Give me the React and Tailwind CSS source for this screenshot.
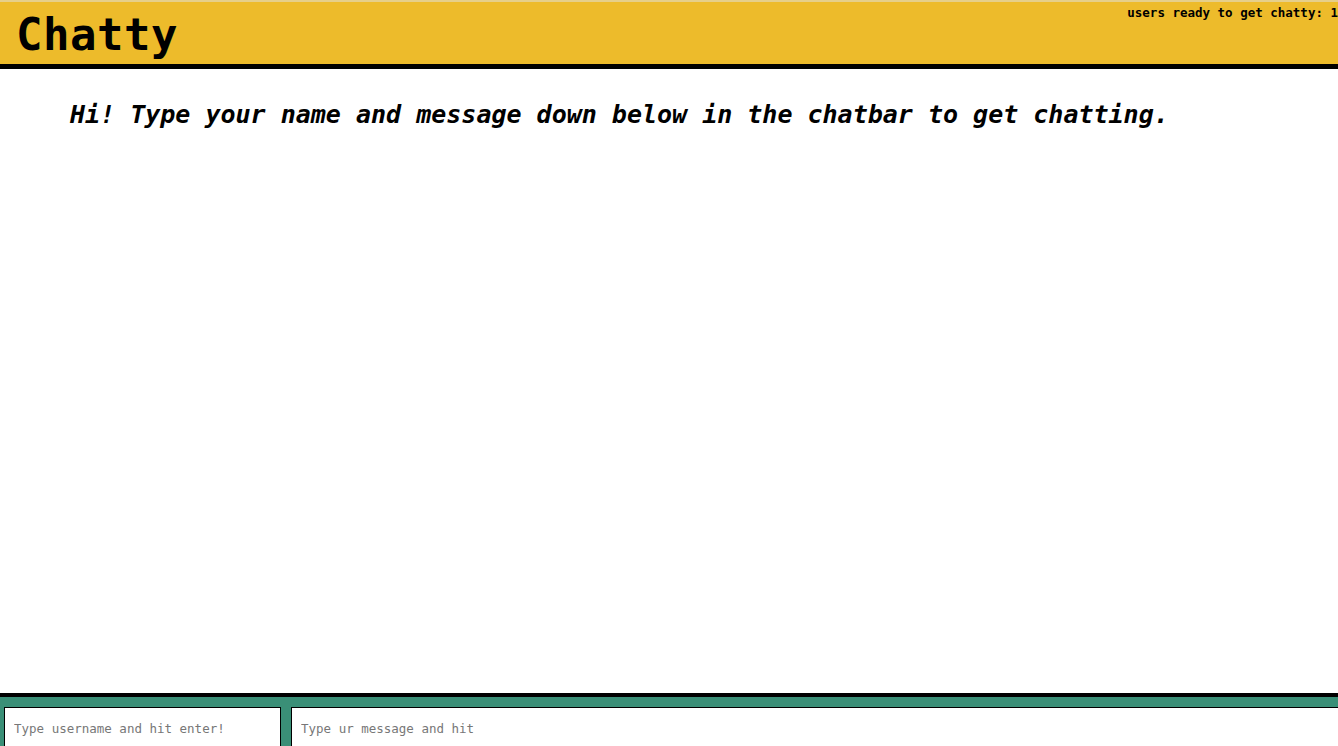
const mono = { fontFamily: '"DejaVu Sans Mono", "Liberation Mono", monospace' };

const App = () => {
  return (
    <div
      className="h-[746px] w-full overflow-hidden bg-white flex flex-col"
      style={mono}
    >
      <header className="h-[69px] shrink-0 bg-[#edbb2b] border-t-[2px] border-t-[#e6cf8a] border-b-[5px] border-b-black flex items-start justify-between">
        <h1 className="text-[44px] leading-none font-bold text-black ml-4 mt-[11px] tracking-[0.5px]">
          Chatty
        </h1>
        <span className="text-[12.5px] font-semibold text-black mt-[2px] whitespace-nowrap">
          users ready to get chatty: 1
        </span>
      </header>

      <main className="flex-1 overflow-hidden">
        <p className="text-[25px] italic font-semibold text-black ml-[70px] mt-[33px] leading-none">
          Hi! Type your name and message down below in the chatbar to get chatting.
        </p>
      </main>

      <footer className="h-[53px] shrink-0 border-t-[4px] border-black bg-[#3a8f77] pt-[10px] flex gap-[10px] pl-[4px]">
        <input
          type="text"
          placeholder="Type username and hit enter!"
          className="w-[277px] h-[60px] shrink-0 bg-white border border-black px-[9px] pb-[18px] text-[12.5px] text-black placeholder:text-[#777] outline-none"
          style={mono}
        />
        <input
          type="text"
          placeholder="Type ur message and hit"
          className="flex-1 h-[60px] -mr-[10px] bg-white border border-black px-[9px] pb-[18px] text-[12.5px] text-black placeholder:text-[#777] outline-none"
          style={mono}
        />
      </footer>
    </div>
  );
};

export default App;
